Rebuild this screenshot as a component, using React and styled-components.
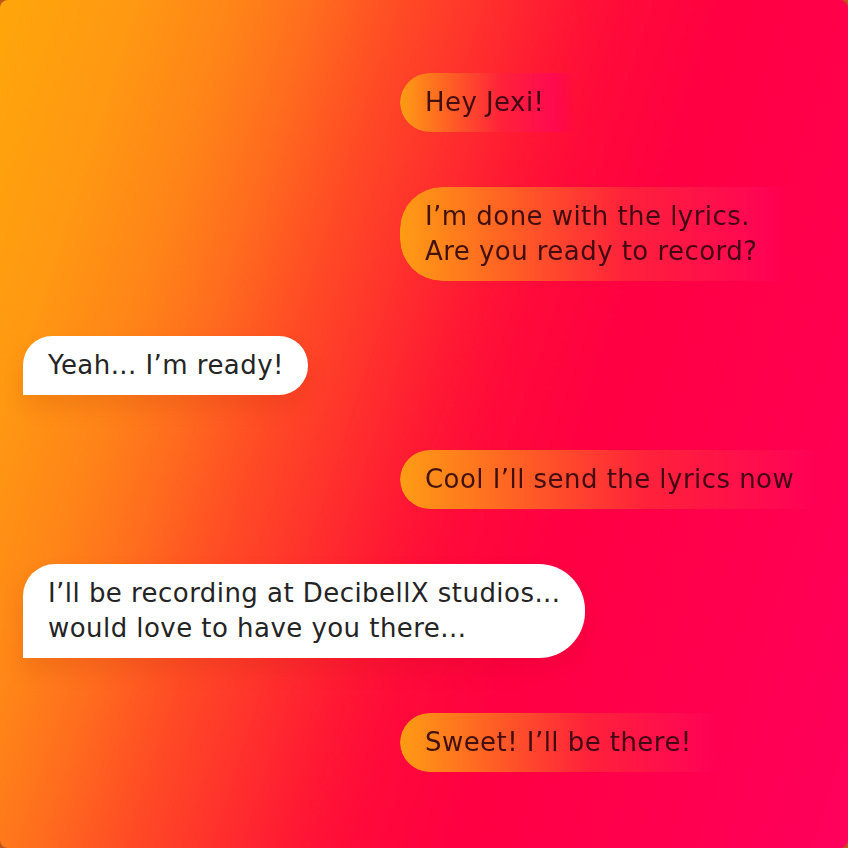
import React from "react";
import styled, { createGlobalStyle } from "styled-components";

const Global = createGlobalStyle`
  html, body { margin: 0; padding: 0; background: #c2541a; }
  body { font-family: "DejaVu Sans", "Noto Sans", sans-serif; }
`;

const Screen = styled.div`
  width: 848px;
  height: 848px;
  box-sizing: border-box;
  border-radius: 8px;
  overflow: hidden;
  background: linear-gradient(
    108deg,
    #ffa60a 0%,
    #ff9812 12%,
    #ff8418 21%,
    #ff6c1e 28%,
    #ff4e24 35%,
    #ff322c 43%,
    #ff1634 51%,
    #ff0a3a 56%,
    #ff0042 65%,
    #ff004e 82%,
    #ff005c 100%
  );
  padding: 73px 23px 0 23px;
  display: flex;
  flex-direction: column;
  gap: 55px;
`;

const Row = styled.div`
  display: flex;
  justify-content: flex-start;
  padding-left: ${(p) => (p.$side === "sent" ? "377px" : "0")};
`;

const Bubble = styled.div`
  flex-shrink: 0;
  font-size: 26px;
  line-height: 35px;
  letter-spacing: 0.45px;
  white-space: pre;
`;

const Sent = styled(Bubble)`
  padding: 12px 30px 12px 25px;
  border-radius: ${(p) => (p.$lines > 1 ? "42px 0 0 42px" : "30px 0 0 30px")};
  background: linear-gradient(90deg, #ff9c14 0%, #ff6024 28%, #ff223a 58%, #ff0058 100%);
  color: rgba(45, 6, 14, 0.9);
  box-shadow: 0 12px 22px rgba(170, 0, 40, 0.18);
  -webkit-mask-image: linear-gradient(90deg, #000 0%, #000 calc(100% - 22px), rgba(0, 0, 0, 0) 100%);
  mask-image: linear-gradient(90deg, #000 0%, #000 calc(100% - 22px), rgba(0, 0, 0, 0) 100%);
`;

const Received = styled(Bubble)`
  padding: 12px 24px 12px 25px;
  border-radius: ${(p) => (p.$lines > 1 ? "32px 46px 46px 0" : "29px 29px 29px 0")};
  background: #ffffff;
  color: #242424;
  box-shadow: 0 12px 22px rgba(150, 20, 0, 0.12);
`;

const messages = [
  { side: "sent", text: "Hey Jexi!" },
  { side: "sent", text: "I’m done with the lyrics.\nAre you ready to record?" },
  { side: "received", text: "Yeah... I’m ready!" },
  { side: "sent", text: "Cool I’ll send the lyrics now" },
  { side: "received", text: "I’ll be recording at DecibellX studios...\nwould love to have you there..." },
  { side: "sent", text: "Sweet! I’ll be there!" },
];

export default function App() {
  return (
    <>
      <Global />
      <Screen>
        {messages.map((m, i) => {
          const lines = m.text.split("\n").length;
          return (
            <Row key={i} $side={m.side}>
              {m.side === "sent" ? (
                <Sent $lines={lines}>{m.text}</Sent>
              ) : (
                <Received $lines={lines}>{m.text}</Received>
              )}
            </Row>
          );
        })}
      </Screen>
    </>
  );
}
